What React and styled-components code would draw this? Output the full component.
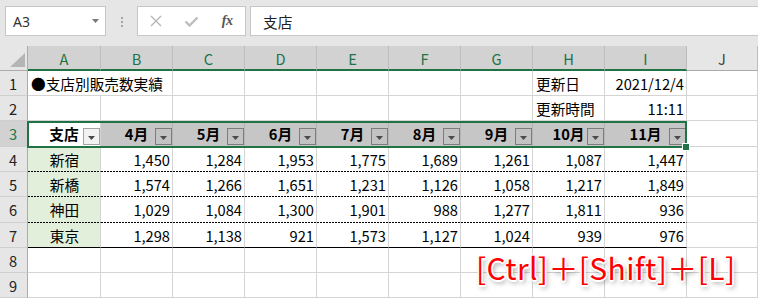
import React from "react";
import styled, { createGlobalStyle, css } from "styled-components";

const GlobalStyle = createGlobalStyle`
  html, body { margin: 0; padding: 0; background: #ffffff; overflow: hidden; }
  body { width: 758px; height: 299px; font-family: "Noto Sans CJK JP", "Noto Sans", sans-serif; }
`;

const Page = styled.div`
  width: 758px;
  height: 299px;
  overflow: hidden;
  background: #ffffff;
  display: flex;
  flex-direction: column;
`;

const FormulaBar = styled.div`
  height: 46px;
  flex: none;
  box-sizing: border-box;
  background: #e6e6e6;
  display: flex;
  align-items: flex-start;
  padding: 6px 0 0 5px;
`;

const NameBox = styled.div`
  width: 101px;
  height: 30px;
  box-sizing: border-box;
  background: #ffffff;
  border: 1px solid #c6c6c6;
  display: flex;
  align-items: center;
  justify-content: space-between;
  padding: 0 6px 0 7px;
  font-family: "Noto Sans", "Open Sans", sans-serif;
  font-size: 14px;
  color: #333333;
`;

const Grip = styled.div`
  width: 31px;
  height: 30px;
  display: flex;
  flex-direction: column;
  align-items: center;
  gap: 2px;
  padding-top: 11px;
  box-sizing: border-box;
`;

const GripDot = styled.span`
  width: 2px;
  height: 2px;
  background: #a6a6a6;
`;

const ButtonBox = styled.div`
  width: 109px;
  height: 30px;
  box-sizing: border-box;
  background: #ffffff;
  border: 1px solid #c6c6c6;
  display: flex;
  align-items: center;
`;

const ToolSlot = styled.div`
  width: 36px;
  height: 28px;
  display: flex;
  align-items: center;
  justify-content: center;
`;

const Fx = styled.span`
  font-family: "Liberation Serif", "DejaVu Serif", serif;
  font-style: italic;
  font-weight: bold;
  font-size: 14px;
  color: #555555;
  letter-spacing: -0.5px;
`;

const FormulaInput = styled.div`
  flex: 1;
  height: 30px;
  margin-left: 4px;
  margin-right: -2px;
  box-sizing: border-box;
  background: #ffffff;
  border: 1px solid #c6c6c6;
  display: flex;
  align-items: center;
  padding-left: 12px;
  font-size: 14.67px;
  color: #222222;
`;

const Sheet = styled.div`
  position: relative;
  display: grid;
  grid-template-columns: 28px 73px repeat(7, 72px) 82px 1fr;
  grid-template-rows: 25px 25px 25px 26px 25px 25px 26px 25px 25px 25px;
  font-size: 14.67px;
  color: #000000;
`;

const Corner = styled.div`
  box-sizing: border-box;
  background: #e6e6e6;
  border-right: 1px solid #ababab;
  border-bottom: 1px solid #ababab;
  display: flex;
  align-items: flex-end;
  justify-content: flex-end;
  padding: 0 2px 3px 0;
`;

const ColHead = styled.div`
  box-sizing: border-box;
  display: flex;
  align-items: center;
  justify-content: center;
  background: ${(p) => (p.$sel ? "#d2d2d2" : "#e6e6e6")};
  color: ${(p) => (p.$sel ? "#217346" : "#444444")};
  border-right: 1px solid #bcbcbc;
  border-bottom: ${(p) => (p.$sel ? "2px solid #217346" : "1px solid #ababab")};
  padding-top: 1px;
`;

const RowHead = styled.div`
  box-sizing: border-box;
  display: flex;
  align-items: center;
  justify-content: center;
  background: ${(p) => (p.$sel ? "#d2d2d2" : "#e6e6e6")};
  color: ${(p) => (p.$sel ? "#217346" : "#222222")};
  border-right: 1px solid #ababab;
  border-bottom: 1px solid #cfcfcf;
  padding-right: 1px;
`;

const bottomLine = {
  grid: css`
    border-bottom: 1px solid #d4d4d4;
  `,
  dot: css`
    border-bottom: 1px solid transparent;
    background-image: repeating-linear-gradient(to right, #000000 0 2px, transparent 2px 3px);
    background-size: 100% 1px;
    background-repeat: no-repeat;
    background-position: 0 100%;
    background-origin: border-box;
  `,
  solid: css`
    border-bottom: 1px solid #000000;
  `,
};

const Cell = styled.div`
  box-sizing: border-box;
  grid-column: span ${(p) => p.$span || 1};
  display: flex;
  align-items: center;
  justify-content: ${(p) =>
    p.$align === "right" ? "flex-end" : p.$align === "center" ? "center" : "flex-start"};
  padding: 0 2px 0 3px;
  white-space: nowrap;
  background-color: ${(p) => p.$bg || "#ffffff"};
  border-right: 1px solid #d4d4d4;
  ${(p) => bottomLine[p.$bottom || "grid"]}
`;

const HeadCell = styled.div`
  box-sizing: border-box;
  display: grid;
  grid-template-columns: 18px 1fr 18px;
  align-items: center;
  background: ${(p) => (p.$active ? "#ffffff" : "#c6c6c6")};
  border-right: 1px solid ${(p) => (p.$active ? "#d4d4d4" : "#b4b4b4")};
  border-bottom: 1px solid #000000;
  font-weight: bold;
`;

const HeadText = styled.span`
  grid-column: 2;
  text-align: center;
  white-space: nowrap;
`;

const FilterBtn = styled.span`
  grid-column: 3;
  justify-self: end;
  align-self: end;
  margin-bottom: 1px;
  width: 17px;
  height: 17px;
  box-sizing: border-box;
  background: ${(p) => (p.$light ? "#f2f2f2" : "#c3c3c3")};
  border: 1px solid ${(p) => (p.$light ? "#a3a3a3" : "#7c7c7c")};
  display: flex;
  align-items: center;
  justify-content: center;
  padding-top: 2px;
`;

const Selection = styled.div`
  position: absolute;
  left: 27px;
  top: 75px;
  width: 660px;
  height: 27px;
  box-sizing: border-box;
  border: 2px solid #217346;
  pointer-events: none;
`;

const FillHandle = styled.div`
  position: absolute;
  left: 682px;
  top: 97px;
  width: 6px;
  height: 6px;
  background: #217346;
  border: 1px solid #ffffff;
`;

const Shortcut = styled.div`
  position: absolute;
  left: 476px;
  top: 206px;
  font-family: "Noto Sans CJK JP", "Noto Sans", sans-serif;
  font-size: 30px;
  font-weight: 400;
  line-height: 1;
  letter-spacing: 0.4px;
  color: #ff0000;
  white-space: nowrap;
  text-shadow: -1px -1px 0 #fff, 1px -1px 0 #fff, -1px 1px 0 #fff, 1px 1px 0 #fff,
    0 -1.5px 0 #fff, 0 1.5px 0 #fff, -1.5px 0 0 #fff, 1.5px 0 0 #fff,
    2px 3px 5px rgba(0, 0, 0, 0.45);
`;

const cols = ["A", "B", "C", "D", "E", "F", "G", "H", "I", "J"];
const months = ["4月", "5月", "6月", "7月", "8月", "9月", "10月", "11月"];
const data = [
  ["新宿", [1450, 1284, 1953, 1775, 1689, 1261, 1087, 1447]],
  ["新橋", [1574, 1266, 1651, 1231, 1126, 1058, 1217, 1849]],
  ["神田", [1029, 1084, 1300, 1901, 988, 1277, 1811, 936]],
  ["東京", [1298, 1138, 921, 1573, 1127, 1024, 939, 976]],
];
const fmt = (n) => n.toLocaleString("en-US");

const Arrow = () => (
  <svg width="7" height="4" viewBox="0 0 7 4">
    <path d="M0 0 H7 L3.5 4 Z" fill="#4a4a4a" />
  </svg>
);

const empties = (n, prefix) =>
  Array.from({ length: n }, (_, i) => <Cell key={`${prefix}-${i}`} />);

export default function App() {
  return (
    <Page>
      <GlobalStyle />
      <FormulaBar>
        <NameBox>
          <span>A3</span>
          <svg width="7" height="4" viewBox="0 0 7 4">
            <path d="M0 0 H7 L3.5 4 Z" fill="#777" />
          </svg>
        </NameBox>
        <Grip>
          <GripDot />
          <GripDot />
          <GripDot />
        </Grip>
        <ButtonBox>
          <ToolSlot>
            <svg width="12" height="12" viewBox="0 0 12 12">
              <path d="M1 1 L11 11 M11 1 L1 11" stroke="#b4b4b4" strokeWidth="1.3" />
            </svg>
          </ToolSlot>
          <ToolSlot>
            <svg width="15" height="11" viewBox="0 0 15 11">
              <path d="M1.5 5.5 L5.5 9.5 L13.5 1.5" stroke="#bdbdbd" strokeWidth="2.4" fill="none" />
            </svg>
          </ToolSlot>
          <ToolSlot>
            <Fx>fx</Fx>
          </ToolSlot>
        </ButtonBox>
        <FormulaInput>支店</FormulaInput>
      </FormulaBar>

      <Sheet>
        <Corner>
          <svg width="15" height="14" viewBox="0 0 15 14">
            <path d="M15 0 V14 H0 Z" fill="#b5b5b5" />
          </svg>
        </Corner>
        {cols.map((c, i) => (
          <ColHead key={c} $sel={i < 9}>
            {c}
          </ColHead>
        ))}

        <RowHead>1</RowHead>
        <Cell $span={2}>●支店別販売数実績</Cell>
        {empties(5, "r1")}
        <Cell>更新日</Cell>
        <Cell $align="right">2021/12/4</Cell>
        <Cell />

        <RowHead>2</RowHead>
        {empties(7, "r2")}
        <Cell>更新時間</Cell>
        <Cell $align="right">11:11</Cell>
        <Cell />

        <RowHead $sel>3</RowHead>
        <HeadCell $active>
          <HeadText>支店</HeadText>
          <FilterBtn $light>
            <Arrow />
          </FilterBtn>
        </HeadCell>
        {months.map((m) => (
          <HeadCell key={m}>
            <HeadText>{m}</HeadText>
            <FilterBtn>
              <Arrow />
            </FilterBtn>
          </HeadCell>
        ))}
        <Cell />

        {data.map(([name, vals], r) => {
          const line = r === data.length - 1 ? "solid" : "dot";
          return (
            <React.Fragment key={name}>
              <RowHead>{r + 4}</RowHead>
              <Cell $align="center" $bg="#e2efda" $bottom={line}>
                {name}
              </Cell>
              {vals.map((v, j) => (
                <Cell key={j} $align="right" $bottom={line}>
                  {fmt(v)}
                </Cell>
              ))}
              <Cell />
            </React.Fragment>
          );
        })}

        {[8, 9].map((n) => (
          <React.Fragment key={n}>
            <RowHead>{n}</RowHead>
            {empties(10, `r${n}`)}
          </React.Fragment>
        ))}

        <Selection />
        <FillHandle />
        <Shortcut>[Ctrl]＋[Shift]＋[L]</Shortcut>
      </Sheet>
    </Page>
  );
}
